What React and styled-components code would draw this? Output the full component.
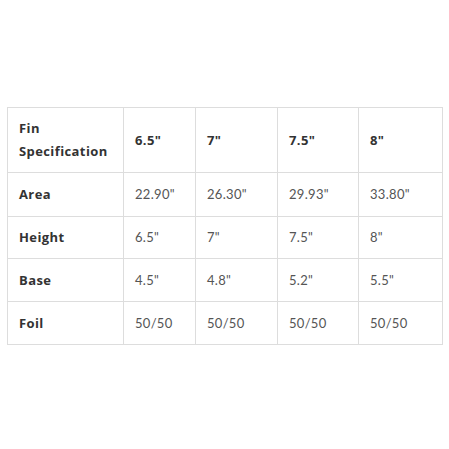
import React from "react";
import styled, { createGlobalStyle } from "styled-components";

const Global = createGlobalStyle`
  html, body { margin: 0; padding: 0; background: #fff; }
  body { width: 449px; height: 449px; overflow: hidden; }
`;

const Page = styled.div`
  padding: 107px 8px 0 7px;
`;

const Table = styled.table`
  border-collapse: collapse;
  table-layout: fixed;
  width: 435px;
`;

const Cell = styled.td`
  border: 1px solid #dddddd;
  padding: 9px 11px;
  line-height: 23px;
  font-size: 13px;
  text-align: left;
  vertical-align: middle;
  font-family: ${(p) => (p.$bold ? '"Open Sans", sans-serif' : '"Lato", sans-serif')};
  font-weight: ${(p) => (p.$bold ? 700 : 400)};
  color: ${(p) => (p.$bold ? "#333333" : "#555555")};
  letter-spacing: ${(p) => (p.$bold ? "0.4px" : "0.3px")};
`;

const widths = [116, 72, 82, 81, 84];
const sizes = ['6.5"', '7"', '7.5"', '8"'];
const rows = [
  { label: "Area", values: ['22.90"', '26.30"', '29.93"', '33.80"'], h: 44 },
  { label: "Height", values: ['6.5"', '7"', '7.5"', '8"'], h: 42 },
  { label: "Base", values: ['4.5"', '4.8"', '5.2"', '5.5"'], h: 43 },
  { label: "Foil", values: ["50/50", "50/50", "50/50", "50/50"], h: 43 },
];

const Row = styled.tr`
  height: ${(p) => p.$h}px;
`;

export default function App() {
  return (
    <>
      <Global />
      <Page>
        <Table>
          <colgroup>
            {widths.map((w, i) => (
              <col key={i} style={{ width: w }} />
            ))}
          </colgroup>
          <tbody>
            <Row $h={64}>
              <Cell $bold>Fin<br />Specification</Cell>
              {sizes.map((s) => (
                <Cell key={s} $bold>{s}</Cell>
              ))}
            </Row>
            {rows.map((r) => (
              <Row key={r.label} $h={r.h}>
                <Cell $bold>{r.label}</Cell>
                {r.values.map((v, i) => (
                  <Cell key={i}>{v}</Cell>
                ))}
              </Row>
            ))}
          </tbody>
        </Table>
      </Page>
    </>
  );
}
